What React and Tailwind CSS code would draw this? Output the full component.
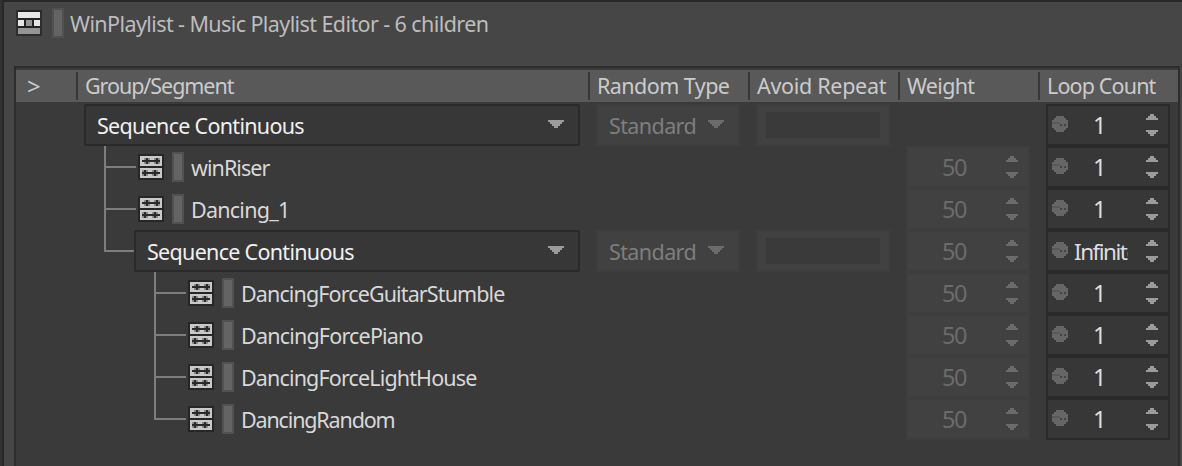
import clsx from 'clsx'

const COLS = 'grid grid-cols-[60px_512px_160px_150px_140px_140px]'

// Every glyph below is drawn on a grid of two-pixel cells
const PlaylistIcon = () => (
    <svg width="26" height="26" viewBox="0 0 13 13" shapeRendering="crispEdges" className="shrink-0">
        <path d="M0 0h13v13H0z" fill="#2d2d2d" />
        <path d="M1 0h11v1H1zM1 4h11v1H1zM1 8h11v1H1z" fill="#222" />
        <path d="M1 1h11v3H1z" fill="#e6e6e6" />
        <path d="M1 5h3v3H1zM9 5h3v3H9z" fill="#e6e6e6" />
        <path d="M4 5h1v3H4zM8 5h1v3H8z" fill="#222" />
        <path d="M5 5h3v3H5z" fill="#959595" />
        <path d="M1 9h11v3H1z" fill="#959595" />
    </svg>
)

const SegmentIcon = () => (
    <svg width="26" height="26" viewBox="0 0 13 13" shapeRendering="crispEdges" className="shrink-0">
        <path d="M0 0h13v13H0z" fill="#262626" />
        <path d="M1 1h11v5H1zM1 7h11v5H1z" fill="#c9c9c9" />
        <path d="M3 2h3v3H3zM8 2h3v3H8zM2 8h3v3H2zM7 8h3v3H7z" fill="#8a8a8a" />
        <path d="M2 3h9v1H2zM4 2h1v3H4zM9 2h1v3H9z" fill="#2a2a2a" />
        <path d="M2 9h9v1H2zM3 8h1v3H3zM8 8h1v3H8z" fill="#2a2a2a" />
    </svg>
)

const Caret = ({ color }) => (
    <svg width="16" height="8" viewBox="0 0 8 4" shapeRendering="crispEdges" className="mb-0.5 shrink-0">
        <path d="M0 0h8v1H7v1H6v1H5v1H3V3H2V2H1V1H0z" fill={color} />
    </svg>
)

const Stepper = ({ color }) => (
    <svg width="12" height="22" viewBox="0 0 6 11" shapeRendering="crispEdges" className="shrink-0">
        <path d="M2 0h2v1h1v1h1v1H0V2h1V1h1zM0 8h6v1H5v1H4v1H2v-1H1V9H0z" fill={color} />
    </svg>
)

const RtpcDot = () => (
    <svg width="16" height="16" viewBox="0 0 8 8" shapeRendering="crispEdges" className="mb-0.5 shrink-0">
        <path d="M2 0h4v1h1v1h1v4H7v1H6v1H2V7H1V6H0V2h1V1h1z" fill="#666" />
        <path d="M0 3h4v1H0z" fill="#5a5a5a" />
        <path d="M4 4h1v1H4zM6 4h1v1H6z" fill="#444" />
    </svg>
)

const ColorBar = () => <div className="h-[30px] w-3 shrink-0 border-2 border-[#515151] bg-[#646464]" />

const Combo = ({ label }) => (
    <div className="flex h-[42px] flex-1 items-center justify-between rounded-[2px] border-2 border-[#2a2a2a] bg-[#373737] pr-3.5 pl-[11px]">
        <span className="pt-0.5 tracking-[-0.7px] text-[#f0f0f0]">{label}</span>
        <Caret color="#9b9b9b" />
    </div>
)

const Weight = () => (
    <div className="ml-2 flex h-[42px] w-[124px] items-center border-2 border-[#3e3e3e] bg-[#414141] text-[#6b6b6b]">
        <span className="w-[98px] shrink-0 pr-1.5 text-center text-[23.5px] tracking-[-1.5px]">50</span>
        <Stepper color="#6b6b6b" />
    </div>
)

const LoopCount = ({ value }) => (
    <div className="ml-2 flex h-[42px] w-[124px] items-center border-2 border-[#2a2a2a] bg-[#373737] pl-1 text-[23.5px] text-[#dedede]">
        <RtpcDot />
        <span
            className={clsx(
                'mr-[18px] ml-1.5 w-[54px] shrink-0 overflow-hidden whitespace-nowrap',
                value === 'Infinite' ? 'pt-px text-[22.5px] tracking-[-1.5px]' : 'pl-[19px]',
            )}
        >
            {value}
        </span>
        <Stepper color="#9b9b9b" />
    </div>
)

const Branch = ({ last, deep, short }) => (
    <div className={clsx('flex h-[42px] shrink-0 flex-col', deep ? 'ml-[78px]' : 'ml-7', short ? 'w-[30px]' : 'w-8')}>
        <div className="h-[22px] border-b-2 border-l-2 border-[#7d7d7d]" />
        {!last && <div className="flex-1 border-l-2 border-[#7d7d7d]" />}
    </div>
)

const ROWS = [
    { group: true, loop: '1' },
    { name: 'winRiser', loop: '1', track: 'tracking-[-0.95px]' },
    { name: 'Dancing_1', loop: '1', track: 'tracking-[-0.75px]' },
    { group: true, nested: true, loop: 'Infinite' },
    { name: 'DancingForceGuitarStumble', deep: true, loop: '1', track: 'tracking-[-0.88px]' },
    { name: 'DancingForcePiano', deep: true, loop: '1', track: 'tracking-[-0.8px]' },
    { name: 'DancingForceLightHouse', deep: true, loop: '1', track: 'tracking-[-0.85px]' },
    { name: 'DancingRandom', deep: true, last: true, loop: '1', track: 'tracking-[-1.15px]' },
]

const Row = ({ row }) => (
    <div className={clsx(COLS, 'h-[42px]')}>
        <div />
        <div className="flex">
            {row.group ? (
                <div className={clsx('flex w-[504px]', !row.nested && 'pl-2')}>
                    {row.nested && <Branch last short />}
                    <Combo label="Sequence Continuous" />
                </div>
            ) : (
                <>
                    <Branch last={row.last} deep={row.deep} />
                    <div className="flex items-center pl-0.5">
                        <SegmentIcon />
                        <div className="mr-[7px] ml-2">
                            <ColorBar />
                        </div>
                        <span className={clsx('pt-0.5 text-[#d8d8d8]', row.track)}>{row.name}</span>
                    </div>
                </>
            )}
        </div>
        <div>
            {row.group && (
                <div className="ml-2 flex h-[42px] w-36 items-center border-2 border-[#3e3e3e] bg-[#414141] pl-[11px]">
                    <span className="w-[99px] pt-0.5 tracking-[-0.6px] text-[#7e7e7e]">Standard</span>
                    <Caret color="#6b6b6b" />
                </div>
            )}
        </div>
        <div>
            {row.group && (
                <div className="ml-2 h-[42px] w-[134px] border-2 border-[#3e3e3e] bg-[#414141] px-2 py-1.5">
                    <div className="h-[26px] bg-[#3a3a3a]" />
                </div>
            )}
        </div>
        <div>{(!row.group || row.nested) && <Weight />}</div>
        <div>
            <LoopCount value={row.loop} />
        </div>
    </div>
)

const HEADS = [
    ['Group/Segment', 'tracking-[-1.05px]'],
    ['Random Type', 'tracking-[-0.55px]'],
    ['Avoid Repeat', 'tracking-[-0.3px]'],
    ['Weight', 'tracking-[-0.7px]'],
    ['Loop Count', 'tracking-[-0.85px]'],
]

export default function App() {
    return (
        <div className="h-[466px] w-[1182px] overflow-hidden bg-[#323232] pl-0.5 font-['Noto_Sans','Open_Sans',sans-serif] text-[21.5px] leading-8">
            <div className="h-full border-t-2 border-l-2 border-[#282828] bg-[#464646]">
                <div className="flex h-16 items-start pt-1.5 pl-3">
                    <div className="flex h-[30px] items-center">
                        <PlaylistIcon />
                        <div className="ml-2.5 flex">
                            <ColorBar />
                        </div>
                        <h1 className="ml-1.5 pt-0.5 tracking-[-0.59px] text-[#bdbdbd]">
                            WinPlaylist - Music Playlist Editor - 6 children
                        </h1>
                    </div>
                </div>
                <div className="ml-2.5 h-[400px] w-[1166px] border-2 border-b-0 border-[#2d2d2d] bg-[#3a3a3a] pt-0.5">
                    <div className={clsx(COLS, 'h-8 items-center bg-[#595959] text-[#cbcbcb]')}>
                        <div className="pl-[11px] text-2xl">&gt;</div>
                        {HEADS.map(([label, track]) => (
                            <div
                                key={label}
                                className={clsx('flex h-7 items-center border-l-2 border-[#373737] pl-[7px] whitespace-nowrap', track)}
                            >
                                {label}
                            </div>
                        ))}
                    </div>
                    <div className="pt-0.5">
                        {ROWS.map((row, i) => (
                            <Row key={i} row={row} />
                        ))}
                    </div>
                </div>
            </div>
        </div>
    )
}
